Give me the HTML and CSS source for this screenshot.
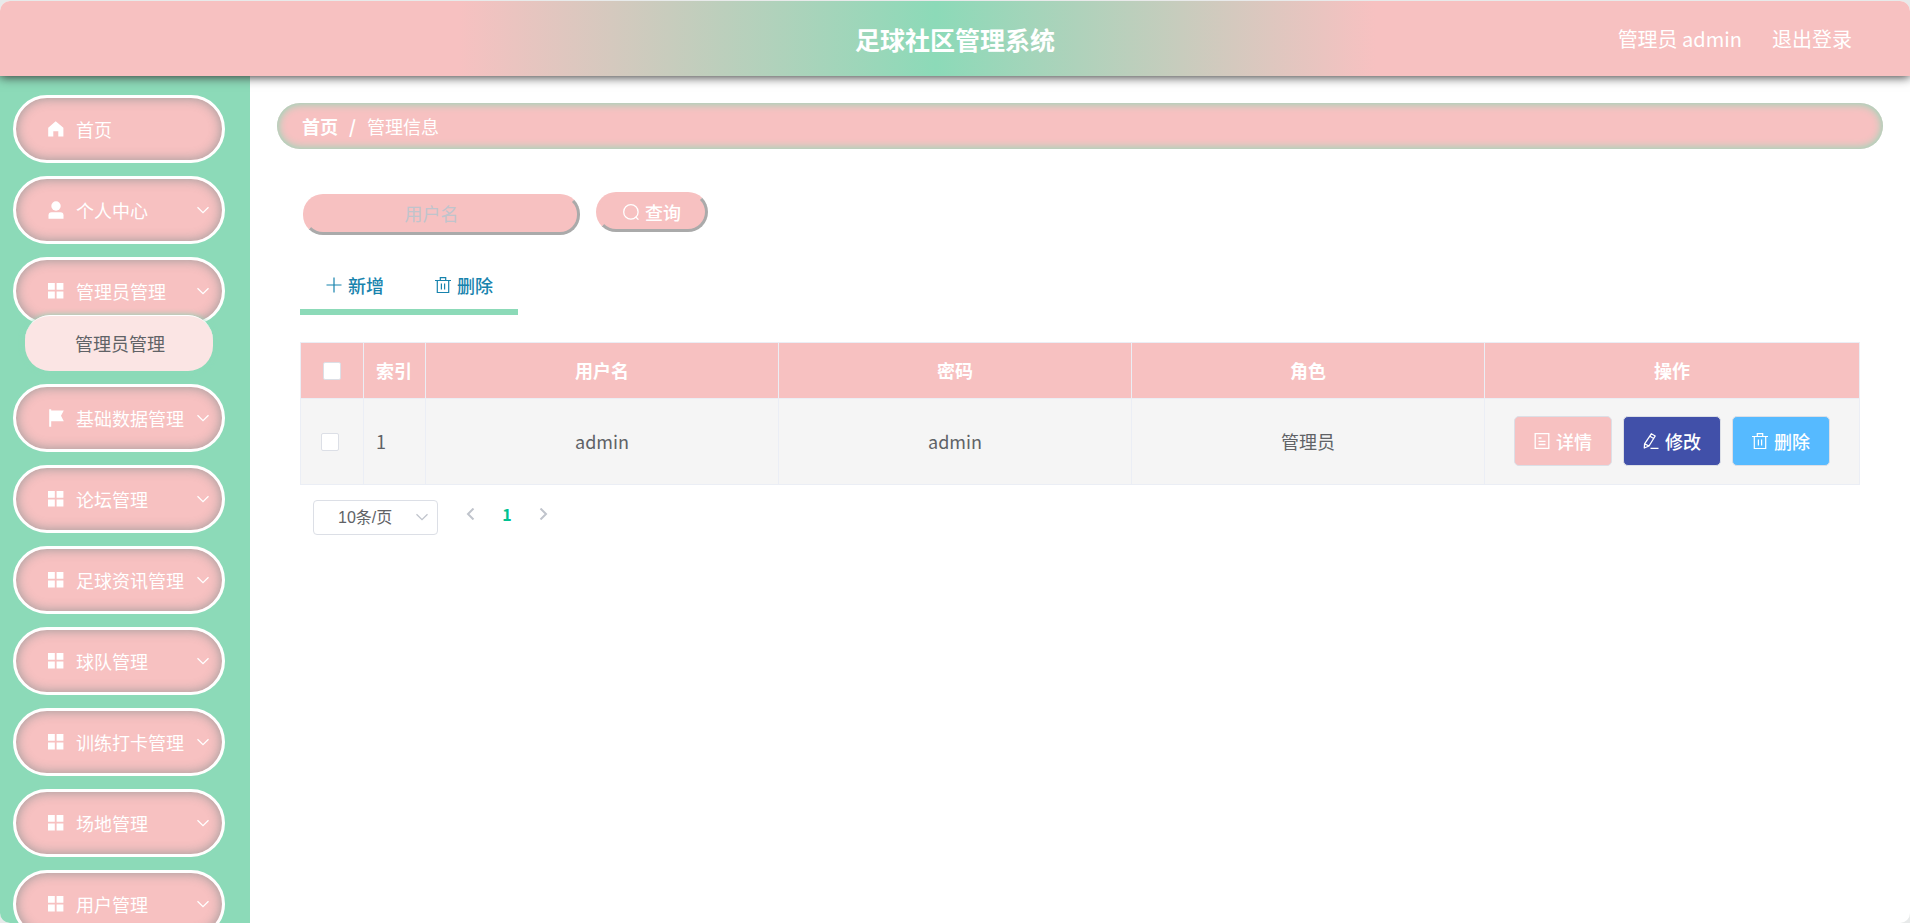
FILE: index.html
```
<!DOCTYPE html>
<html lang="zh-CN">
<head>
  <meta charset="UTF-8">
  <title>足球社区管理系统</title>
  <link rel="stylesheet" href="styles.css">
</head>
<body>
  <!-- icon set -->
  <svg class="sprite" aria-hidden="true">
    <symbol id="i-home" viewBox="0 0 16 18"><path d="M7.7 1.3 L15.4 7.8 V16.5 H10.300 V11.300 H5.300 V16.5 H0.200 V7.8 Z" fill="currentColor"/></symbol>
    <symbol id="i-user" viewBox="0 0 16 18"><circle cx="8" cy="5" r="4.7" fill="currentColor"/><path d="M0.5 17.7 V14.2 Q0.5 11.2 3.5 11.2 H12.5 Q15.5 11.2 15.5 14.2 V17.7 Z" fill="currentColor"/></symbol>
    <symbol id="i-menu" viewBox="0 0 16 18"><path d="M0 1h6.800v6.800H0zM8.600 1h6.800v6.800H8.600zM0 9.600h6.800v6.800H0zM8.600 9.600h6.800v6.800H8.600z" fill="currentColor"/></symbol>
    <symbol id="i-flag" viewBox="0 0 16 18"><path d="M1.2 0.3h2v1.2h12.6l-2.8 5.2 2.8 5.5H3.2v5.5h-2z" fill="currentColor"/></symbol>
    <symbol id="i-down" viewBox="0 0 12 12"><path d="M0.5 3.3 L6 8.7 L11.5 3.3" fill="none" stroke="currentColor" stroke-width="1.300"/></symbol>
    <symbol id="i-search" viewBox="0 0 16 16"><path d="M12.6 12.8 L15.4 15.6" fill="none" stroke="currentColor" stroke-width="1.300"/><circle cx="7.9" cy="7.9" r="7.200" fill="none" stroke="currentColor" stroke-width="1.300"/></symbol>
    <symbol id="i-plus" viewBox="0 0 16 16"><path d="M8 0.5v15M0.5 8h15" fill="none" stroke="currentColor" stroke-width="1.200"/></symbol>
    <symbol id="i-trash" viewBox="0 0 16 16"><path d="M0 3.5h16M2.3 3.5v12h11.4v-12M5.300 3.5v-2.800h5.400v2.800M6.400 6.500v6M9.600 6.500v6" fill="none" stroke="currentColor" stroke-width="1.200"/></symbol>
    <symbol id="i-doc" viewBox="0 0 16 16"><path d="M1.200 0.700h13.600v14.600h-13.600zM4.500 5h3M4.500 8.300h7M4.500 11.500h7" fill="none" stroke="currentColor" stroke-width="1.300"/></symbol>
    <symbol id="i-edit" viewBox="0 0 16 16"><path d="M8.300 0.800 L12.200 3 L6 13 L1.300 15 L1.600 10.800 Z M7 3.300 L10.600 5.500 M1.600 10.800 L6 13 M7.500 15.300h8" fill="none" stroke="currentColor" stroke-width="1.300" stroke-linejoin="round"/></symbol>
    <symbol id="i-prev" viewBox="0 0 12 12"><path d="M8.500 0.500 L3 6 L8.500 11.500" fill="none" stroke="currentColor" stroke-width="2"/></symbol>
    <symbol id="i-next" viewBox="0 0 12 12"><path d="M3.500 0.500 L9 6 L3.500 11.500" fill="none" stroke="currentColor" stroke-width="2"/></symbol>
  </svg>

  <div class="app">
    <header class="navbar">
      <h1 class="title">足球社区管理系统</h1>
      <div class="right-menu">
        <span>管理员 admin</span>
        <a href="#">退出登录</a>
      </div>
    </header>

    <div class="container">
      <nav class="sidebar">
        <ul class="menu">
          <li><a class="menu-item" href="#"><svg class="menu-icon"><use href="#i-home"/></svg><span>首页</span></a></li>
          <li><button class="menu-item"><svg class="menu-icon"><use href="#i-user"/></svg><span>个人中心</span><svg class="arrow"><use href="#i-down"/></svg></button></li>
          <li class="opened">
            <button class="menu-item"><svg class="menu-icon"><use href="#i-menu"/></svg><span>管理员管理</span><svg class="arrow"><use href="#i-down"/></svg></button>
            <a class="submenu-item" href="#">管理员管理</a>
          </li>
          <li><button class="menu-item"><svg class="menu-icon"><use href="#i-flag"/></svg><span>基础数据管理</span><svg class="arrow"><use href="#i-down"/></svg></button></li>
          <li><button class="menu-item"><svg class="menu-icon"><use href="#i-menu"/></svg><span>论坛管理</span><svg class="arrow"><use href="#i-down"/></svg></button></li>
          <li><button class="menu-item"><svg class="menu-icon"><use href="#i-menu"/></svg><span>足球资讯管理</span><svg class="arrow"><use href="#i-down"/></svg></button></li>
          <li><button class="menu-item"><svg class="menu-icon"><use href="#i-menu"/></svg><span>球队管理</span><svg class="arrow"><use href="#i-down"/></svg></button></li>
          <li><button class="menu-item"><svg class="menu-icon"><use href="#i-menu"/></svg><span>训练打卡管理</span><svg class="arrow"><use href="#i-down"/></svg></button></li>
          <li><button class="menu-item"><svg class="menu-icon"><use href="#i-menu"/></svg><span>场地管理</span><svg class="arrow"><use href="#i-down"/></svg></button></li>
          <li><button class="menu-item"><svg class="menu-icon"><use href="#i-menu"/></svg><span>用户管理</span><svg class="arrow"><use href="#i-down"/></svg></button></li>
        </ul>
      </nav>

      <main class="main">
        <div class="breadcrumb">
          <a href="#">首页</a>
          <b>/</b>
          <span>管理信息</span>
        </div>

        <div class="content">
          <form class="search-form">
            <input class="search-input" type="text" placeholder="用户名" aria-label="用户名">
            <button class="search-btn" type="button"><svg class="icon"><use href="#i-search"/></svg>查询</button>
          </form>

          <div class="actions">
            <button><svg class="icon"><use href="#i-plus"/></svg>新增</button>
            <button><svg class="icon"><use href="#i-trash"/></svg>删除</button>
          </div>

          <table class="table">
            <thead>
              <tr>
                <th class="col-check"><input type="checkbox" aria-label="全选"></th>
                <th class="col-index">索引</th>
                <th>用户名</th>
                <th>密码</th>
                <th>角色</th>
                <th class="col-ops">操作</th>
              </tr>
            </thead>
            <tbody>
              <tr>
                <td class="col-check"><input type="checkbox" aria-label="选择"></td>
                <td class="col-index">1</td>
                <td>admin</td>
                <td>admin</td>
                <td>管理员</td>
                <td class="col-ops">
                  <div class="ops">
                    <button class="btn-detail"><svg class="icon"><use href="#i-doc"/></svg>详情</button>
                    <button class="btn-edit"><svg class="icon"><use href="#i-edit"/></svg>修改</button>
                    <button class="btn-delete"><svg class="icon"><use href="#i-trash"/></svg>删除</button>
                  </div>
                </td>
              </tr>
            </tbody>
          </table>

          <div class="pagination">
            <div class="page-size">
              <select aria-label="每页条数">
                <option>10条/页</option>
              </select>
              <svg class="select-arrow"><use href="#i-down"/></svg>
            </div>
            <div class="pager">
              <button aria-label="上一页"><svg class="page-icon"><use href="#i-prev"/></svg></button>
              <button class="active">1</button>
              <button aria-label="下一页"><svg class="page-icon"><use href="#i-next"/></svg></button>
            </div>
          </div>
        </div>
      </main>
    </div>
  </div>
</body>
</html>
```
FILE: styles.css
```
* {
  box-sizing: border-box;
}

html {
  background: #e8eaea;
}

body {
  margin: 0;
  padding-top: 1px;
  height: 100vh;
  overflow: hidden;
  font-family: "Noto Sans CJK SC", sans-serif;
  font-size: 18px;
  line-height: 24px;
  color: #606266;
}

button, input {
  font: inherit;
}

button {
  cursor: pointer;
}

a {
  color: inherit;
  text-decoration: none;
}

.sprite {
  display: none;
}

.app {
  height: 100%;
  display: flex;
  flex-direction: column;
  background: #fff;
  border-radius: 10px;
  overflow: hidden;
}

/* header */
.navbar {
  flex: none;
  height: 75px;
  padding: 0 58px;
  display: grid;
  grid-template-columns: 1fr auto 1fr;
  align-items: center;
  color: #fff;
  background: linear-gradient(90deg, #f7c1c1 24%, #8cdab8 49%, #f7c1c1 72%);
  box-shadow: 0 1px 10px #333;
  z-index: 2;
}

.title {
  grid-column: 2;
  margin: 0;
  font-size: 25px;
  font-weight: 700;
}

.right-menu {
  display: flex;
  justify-content: flex-end;
  gap: 30px;
  font-size: 20px;
}

.container {
  flex: 1;
  display: flex;
  min-height: 0;
}

/* sidebar */
.sidebar {
  flex: none;
  width: 250px;
  padding: 19px 25px 0 13px;
  background: #8cdab8;
  overflow: hidden;
}

.menu {
  list-style: none;
  margin: 0;
  padding: 0;
  display: flex;
  flex-direction: column;
  gap: 13px;
}

.menu-item {
  width: 100%;
  height: 68px;
  padding: 0 14px 1px 32px;
  display: flex;
  align-items: center;
  gap: 12px;
  color: #fff;
  background: #f7c1c1;
  border: 3px solid #fff;
  border-radius: 40px;
  box-shadow: inset 0 0 12px #999;
}

.menu-icon {
  flex: none;
  width: 16px;
  height: 18px;
}

.arrow {
  flex: none;
  width: 12px;
  height: 12px;
  margin-left: auto;
}

.menu-item span {
  white-space: nowrap;
}

/* the longest labels may run up to the arrow */
.menu-item span + .arrow {
  margin-right: -1px;
}

.submenu-item {
  position: relative;
  height: 56px;
  margin: -10px 12px 0;
  padding: 0 0 1px 50px;
  display: flex;
  align-items: center;
  background: #fbe5e4;
  border-top: 1px solid #fff;
  border-radius: 25px;
  box-shadow: 0 0 6px #8cdab8;
}

/* main */
.main {
  flex: 1;
  padding: 27px;
}

.breadcrumb {
  height: 46px;
  padding: 0 25px 1px;
  display: flex;
  align-items: center;
  gap: 11px;
  color: #fff;
  background: #f7c1c1;
  border-radius: 25px;
  box-shadow: inset 0 0 8px 1px #8cdab8;
}

.breadcrumb a {
  font-weight: 700;
}

.content {
  padding: 43px 23px 0;
}

.search-form {
  display: flex;
  gap: 16px;
  padding-left: 3px;
}

.search-input,
.search-btn {
  height: 40px;
  color: #fff;
  background: #f7c1c1;
  border: 3px solid;
  border-color: #f7c1c1 #aaa #aaa #f7c1c1;
  border-radius: 20px;
}

.search-input {
  width: 277px;
  height: 41px;
  margin-top: 2px;
  padding: 0 30px 3px 10px;
  text-align: center;
  outline: none;
}

.search-input::placeholder {
  color: #c0c4cc;
}

.search-btn {
  width: 112px;
  padding: 0;
  display: flex;
  align-items: center;
  justify-content: center;
  gap: 6px;
  font-weight: 500;
}

.icon {
  width: 16px;
  height: 16px;
  flex: none;
}

.actions {
  width: fit-content;
  margin-top: 26px;
  display: flex;
  border-bottom: 6px solid #8cdab8;
}

.actions button {
  height: 48px;
  padding: 0 25px 1px 26px;
  display: flex;
  align-items: center;
  gap: 6px;
  color: #1783ad;
  font-weight: 500;
  background: none;
  border: none;
}

/* table */
.table {
  width: 100%;
  margin-top: 27px;
  table-layout: fixed;
  border-collapse: collapse;
  text-align: center;
}

.table th,
.table td {
  padding: 0 12px 1px;
  border: 1px solid #ebeef5;
}

.table th {
  height: 56px;
  color: #fff;
  background: #f7c1c1;
}

.table td {
  height: 86px;
  background: #f5f5f5;
}

.table .col-check {
  width: 63px;
  padding: 0;
}

.table .col-index {
  width: 62px;
  text-align: left;
}

.table .col-ops {
  width: 375px;
}

.table input {
  appearance: none;
  display: block;
  width: 18px;
  height: 18px;
  margin: 0 auto;
  background: #fff;
  border: 1px solid #dcdfe6;
  border-radius: 2px;
}

.table td input {
  margin-left: 20px;
}

.ops {
  display: flex;
  justify-content: center;
  gap: 11px;
}

.ops button {
  width: 98px;
  height: 50px;
  padding: 0 0 1px;
  display: flex;
  align-items: center;
  justify-content: center;
  gap: 6px;
  color: #fff;
  font-weight: 500;
  border: 1px solid #dcdfe6;
  border-radius: 5px;
}

.ops .btn-detail {
  background: #f7c1c1;
}

.ops .btn-edit {
  background: #4150a9;
}

.ops .btn-delete {
  background: #56baff;
}

/* pagination */
.pagination {
  display: flex;
  gap: 15px;
  padding: 15px 13px;
}

.page-size {
  position: relative;
}

.page-size select {
  appearance: none;
  width: 125px;
  height: 35px;
  padding: 0 24px;
  font-family: "Liberation Sans", "Noto Sans CJK SC", sans-serif;
  font-size: 16px;
  color: #606266;
  background: #fff;
  border: 1px solid #dcdfe6;
  border-radius: 4px;
}

.select-arrow {
  position: absolute;
  top: 11px;
  right: 10px;
  width: 12px;
  height: 12px;
  color: #c0c4cc;
  pointer-events: none;
}

.pager {
  display: flex;
}

.pager button {
  width: 36px;
  height: 28px;
  padding: 0;
  display: flex;
  align-items: center;
  justify-content: center;
  color: #c0c4cc;
  font-size: 16px;
  font-weight: 700;
  background: none;
  border: none;
}

.pager .active {
  color: #00c292;
}

.page-icon {
  width: 12px;
  height: 12px;
}
```
